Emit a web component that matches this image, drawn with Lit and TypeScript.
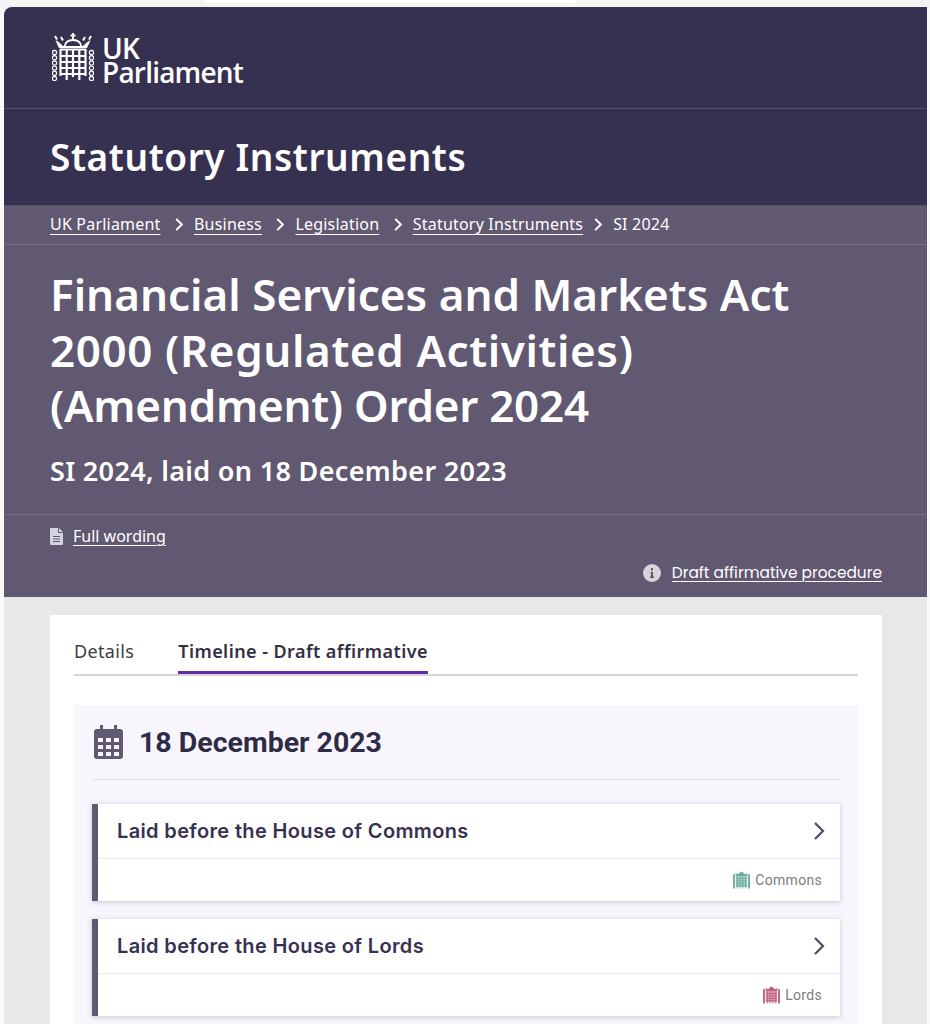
import { LitElement, html, css, svg } from "lit";
import { customElement } from "lit/decorators.js";

// small portcullis used for the house labels
const house = (color: string) => html`<svg class="house" viewBox="0 0 18 18" fill="none" stroke=${color}>
  <path d="M3 5 2.500 1.500 5.500 3 6.500 1.500 9 0 11.500 1.500 12.500 3 15.500 1.500 15 5Z" fill=${color} stroke="none" />
  <path d="M1 3V18M17 3V18" stroke-width="2" />
  <rect x="3" y="5" width="12" height="11.500" fill=${color} fill-opacity="0.55" stroke="none" />
  <path d="M3 7.500H15M3 10H15M3 12.500H15M3 15H15M4.500 5V18M7.500 5V18M10.500 5V18M13.500 5V18" stroke-width="1" />
</svg>`;

const chain = (x: number) =>
  [0, 1, 2, 3, 4, 5].map(
    (i) => svg`<circle cx=${x} cy=${19.5 + i * 5.2} r="2.100" stroke-width="1.200" />`
  );

const bigPortcullis = html`<svg class="crest" viewBox="0 0 42 48" fill="none" stroke="#fff">
  <path d="M21 0V7M18.500 2.500H23.500" stroke-width="2" />
  <path d="M21 7C16 7 13 10 12.500 14M21 7C26 7 29 10 29.500 14" stroke-width="1.800" />
  <path d="M3 3 5 6.500M39 3 37 6.500M9 4 11 7.500M33 4 31 7.500" stroke-width="2" />
  <path d="M3.500 7C5 11 6 13 7 15H35C36 13 37 11 38.500 7 35 9 33 11 31 13H11C9 11 7 9 3.500 7Z" fill="#fff" stroke="none" />
  ${chain(2.5)} ${chain(39.5)}
  <path d="M8 16.500H34M8 23H34M8 29H34M8 35H34M8 41H34" stroke-width="1.800" />
  <path d="M8.500 16V43M14.700 16V47M21 16V44M27.300 16V47M33.500 16V43" stroke-width="2.200" />
</svg>`;

const chevron = (last = false) => html`<svg class="crumb-sep ${last ? "last" : ""}" viewBox="0 0 10 16" fill="none" stroke="#fff" stroke-width="2.200">
  <path d="M2 2 8 8 2 14" />
</svg>`;

@customElement("app-root")
export class AppRoot extends LitElement {
  static styles = css`
    :host {
      display: block;
      height: 1024px;
      overflow: hidden;
      background: #fafafa;
      font-family: "Noto Sans", sans-serif;
    }
    .browser-edge {
      height: 7px;
      background: #f4f4f4;
    }
    .browser-edge div {
      width: 372px;
      height: 3px;
      margin-left: 204px;
      background: #fff;
      border-radius: 0 0 6px 6px;
    }
    .page {
      margin: 0 3px 0 4px;
      background: #e9e8e6;
      height: 1017px;
      border-radius: 8px 0 0 0;
      overflow: hidden;
    }
    a {
      color: #fff;
      text-decoration: underline;
      text-underline-offset: 3px;
      text-decoration-thickness: 1px;
    }

    .top {
      background: #373151;
    }
    .logo-row {
      height: 102px;
      box-sizing: border-box;
      padding: 26px 0 0 48px;
      display: flex;
      gap: 8px;
      border-bottom: 1px solid #57506d;
    }
    .crest {
      width: 42px;
      height: 48px;
    }
    .wordmark {
      color: #fff;
      font-family: "Open Sans", sans-serif;
      font-size: 28px;
      font-weight: 600;
      line-height: 24px;
      letter-spacing: -0.800px;
      padding-top: 3px;
    }
    .section-name {
      height: 96px;
      box-sizing: border-box;
      padding: 25px 46px 0;
      color: #fff;
      font-size: 37px;
      line-height: 46px;
      font-weight: 600;
      letter-spacing: 0.600px;
    }

    .hero {
      background: #615871;
      color: #fff;
    }
    .crumbs {
      height: 40px;
      box-sizing: border-box;
      padding: 0 46px 2px;
      display: flex;
      align-items: center;
      font-size: 16px;
      letter-spacing: 0.200px;
      border-bottom: 1px solid #766e85;
      border-top: 1px solid #56506a;
    }
    .crumb-sep {
      width: 10px;
      height: 15px;
      margin: 0 10px 0 13.500px;
    }
    .crumb-sep.last {
      margin-left: 10px;
    }
    .crumbs a {
      text-underline-offset: 4px;
    }
    .title-block {
      height: 270px;
      box-sizing: border-box;
      padding: 22px 46px 0;
      border-bottom: 1px solid #766e85;
    }
    h1 {
      margin: 0;
      font-size: 44px;
      line-height: 55.500px;
      font-weight: 600;
    }
    h1 span {
      display: block;
      white-space: nowrap;
    }
    h1 .wide {
      letter-spacing: 0.600px;
    }
    h1 .tight {
      letter-spacing: -0.250px;
    }
    .laid {
      margin-top: 20px;
      font-size: 27px;
      line-height: 34px;
      font-weight: 600;
      letter-spacing: 0.330px;
    }
    .links {
      height: 82px;
      box-sizing: border-box;
      padding: 9px 45px 0 46px;
      font-size: 16px;
      line-height: 24px;
    }
    .link-row {
      display: flex;
      align-items: center;
      gap: 10px;
    }
    .link-row.end {
      justify-content: flex-end;
      margin-top: 13px;
      gap: 11px;
    }
    .link-row svg {
      flex: none;
    }
    .procedure {
      font-family: Poppins, "Open Sans", sans-serif;
      font-size: 15.400px;
    }

    .sheet {
      margin: 18px 45px 0 46px;
      background: #fff;
      padding: 16px 24px 0;
    }
    .tabs {
      display: flex;
      gap: 44px;
      height: 43px;
      border-bottom: 2px solid #d6d5d5;
      font-size: 18px;
      color: #3b3b45;
    }
    .tab {
      line-height: 40px;
      letter-spacing: 0.350px;
    }
    .tab.active {
      font-weight: 600;
      height: 40px;
      letter-spacing: 0.430px;
      border-bottom: 3px solid #5f2dab;
      color: #34303f;
    }

    .day {
      margin-top: 29px;
      background: #f8f6fc;
      padding: 0 18px 18px;
    }
    .day-head {
      height: 74px;
      display: flex;
      align-items: center;
      gap: 16px;
      padding-left: 2px;
      border-bottom: 1px solid #e6e4ea;
      font-family: Roboto, sans-serif;
      font-size: 28.500px;
      font-weight: 700;
      color: #2f2b47;
    }
    .cal {
      width: 29px;
      height: 34px;
    }
    .items {
      margin-top: 24px;
      display: flex;
      flex-direction: column;
      gap: 18px;
    }
    .item {
      background: #fff;
      border-left: 6px solid #615871;
      box-shadow: 0 1px 5px rgba(50, 45, 70, 0.25);
    }
    .item-main {
      height: 55px;
      box-sizing: border-box;
      display: flex;
      align-items: center;
      justify-content: space-between;
      padding: 0 15px 1px 19px;
      border-bottom: 1px solid #ebebeb;
      font-family: Inter, sans-serif;
      font-size: 20px;
      font-weight: 600;
      letter-spacing: 0.350px;
      color: #373151;
    }
    .item-main svg {
      width: 12px;
      height: 20px;
    }
    .item-foot {
      height: 42px;
      display: flex;
      align-items: center;
      justify-content: flex-end;
      gap: 5px;
      padding-right: 18px;
      font-family: Roboto, sans-serif;
      font-size: 14px;
      letter-spacing: 0.300px;
      color: #7d7d7d;
    }
    .house {
      width: 17px;
      height: 18px;
    }
  `;

  render() {
    const crumbs = ["UK Parliament", "Business", "Legislation", "Statutory Instruments"];
    const items = [
      { title: "Laid before the House of Commons", house: "Commons", color: "#6fae9e" },
      { title: "Laid before the House of Lords", house: "Lords", color: "#c0617f" },
    ];
    return html`
      <div class="browser-edge"><div></div></div>
      <div class="page">
        <div class="top">
          <div class="logo-row">
            ${bigPortcullis}
            <div class="wordmark">UK<br />Parliament</div>
          </div>
          <div class="section-name">Statutory Instruments</div>
        </div>
        <div class="hero">
          <nav class="crumbs">
            ${crumbs.map((c, i) => html`<a href="#">${c}</a>${chevron(i === crumbs.length - 1)}`)}
            <span>SI 2024</span>
          </nav>
          <div class="title-block">
            <h1>
              <span>Financial Services and Markets Act</span>
              <span class="wide">2000 (Regulated Activities)</span>
              <span class="tight">(Amendment) Order 2024</span>
            </h1>
            <div class="laid">SI 2024, laid on 18 December 2023</div>
          </div>
          <div class="links">
            <div class="link-row">
              <svg width="13" height="17" viewBox="0 0 13 17">
                <path d="M1 0H8V5H13V16A1 1 0 0 1 12 17H1A1 1 0 0 1 0 16V1A1 1 0 0 1 1 0ZM9 0 13 4H9Z" fill="#d6d3db" />
                <path d="M3 8.500H10M3 11H10M3 13.500H10" stroke="#615871" stroke-width="1" />
              </svg>
              <a href="#">Full wording</a>
            </div>
            <div class="link-row end">
              <svg width="18" height="18" viewBox="0 0 18 18">
                <circle cx="9" cy="9" r="9" fill="#d6d3db" />
                <path d="M7.500 8H10V12.500H11V14H7V12.500H8V9.500H7.500ZM8 4H10V6.500H8Z" fill="#615871" />
              </svg>
              <a class="procedure" href="#">Draft affirmative procedure</a>
            </div>
          </div>
        </div>
        <div class="sheet">
          <div class="tabs">
            <div class="tab">Details</div>
            <div class="tab active">Timeline - Draft affirmative</div>
          </div>
          <div class="day">
            <div class="day-head">
              <svg class="cal" viewBox="0 0 29 34">
                <path fill-rule="evenodd" fill="#615871" d="M6 0H9V4H20V0H23V4H26A3 3 0 0 1 29 7V31A3 3 0 0 1 26 34H3A3 3 0 0 1 0 31V7A3 3 0 0 1 3 4H6ZM4 13V17H9V13ZM12 13V17H17V13ZM20 13V17H25V13ZM4 20V24H9V20ZM12 20V24H17V20ZM20 20V24H25V20ZM4 27V31H9V27ZM12 27V31H17V27ZM20 27V31H25V27Z" />
              </svg>
              <span>18 December 2023</span>
            </div>
            <div class="items">
              ${items.map(
                (it) => html`
                  <div class="item">
                    <div class="item-main">
                      <span>${it.title}</span>
                      <svg viewBox="0 0 12 20" fill="none" stroke="#50495f" stroke-width="2.200">
                        <path d="M2 2 10 10 2 18" />
                      </svg>
                    </div>
                    <div class="item-foot">${house(it.color)}<span>${it.house}</span></div>
                  </div>
                `
              )}
            </div>
          </div>
        </div>
      </div>
    `;
  }
}
